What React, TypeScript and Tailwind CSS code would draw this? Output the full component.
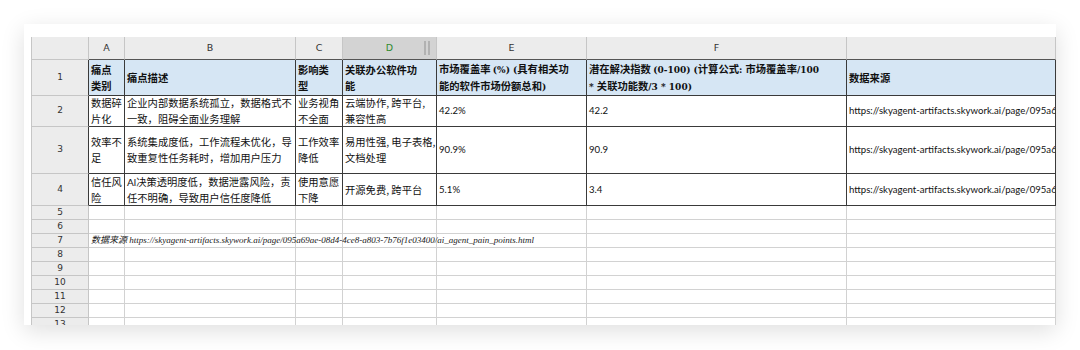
import React from "react";

const COLS = [58, 36, 171, 47, 94, 150, 260, 209];
const ROWS = [23, 36, 31, 47, 32, 14, 14, 14, 14, 14, 14, 14, 14, 14];
const LETTERS = ["", "A", "B", "C", "D", "E", "F", ""];

const URL =
    "https://skyagent-artifacts.skywork.ai/page/095a69ae-08d4-4ce8-a803-7b76f1e03400/ai_agent_pain_points.html";

// small serif bold for latin bits of the header row
const L: React.FC<{ children: React.ReactNode }> = ({ children }) => (
    <span className="font-['DejaVu_Serif','Noto_Sans_CJK_SC',serif] text-[9px]">{children}</span>
);

type Cell = { lines: React.ReactNode[]; latin?: boolean };

const DATA: Cell[][] = [
    [
        { lines: ["痛点", "类别"] },
        { lines: ["痛点描述"] },
        { lines: ["影响类", "型"] },
        { lines: ["关联办公软件功", "能"] },
        { lines: [<>市场覆盖率 <L>(%) (</L>具有相关功</>, <>能的软件市场份额总和<L>)</L></>] },
        {
            lines: [
                <>潜在解决指数 <L>(0-100) (</L>计算公式<L>: </L>市场覆盖率<L>/100</L></>,
                <><L>* </L>关联功能数<L>/3 * 100)</L></>,
            ],
        },
        { lines: ["数据来源"] },
    ],
    [
        { lines: ["数据碎", "片化"] },
        { lines: ["企业内部数据系统孤立，数据格式不", "一致，阻碍全面业务理解"] },
        { lines: ["业务视角", "不全面"] },
        { lines: ["云端协作, 跨平台,", "兼容性高"] },
        { lines: ["42.2%"], latin: true },
        { lines: ["42.2"], latin: true },
        { lines: [URL], latin: true },
    ],
    [
        { lines: ["效率不", "足"] },
        { lines: ["系统集成度低，工作流程未优化，导", "致重复性任务耗时，增加用户压力"] },
        { lines: ["工作效率", "降低"] },
        { lines: ["易用性强, 电子表格,", "文档处理"] },
        { lines: ["90.9%"], latin: true },
        { lines: ["90.9"], latin: true },
        { lines: [URL], latin: true },
    ],
    [
        { lines: ["信任风", "险"] },
        { lines: [<><span className="font-['Lato',sans-serif] text-[10px]">Al</span>决策透明度低，数据泄露风险，责</>, "任不明确，导致用户信任度降低"] },
        { lines: ["使用意愿", "下降"] },
        { lines: ["开源免费, 跨平台"] },
        { lines: ["5.1%"], latin: true },
        { lines: ["3.4"], latin: true },
        { lines: [URL], latin: true },
    ],
];

const ColHeader: React.FC<{ c: number }> = ({ c }) => {
    const selected = c === 4;
    return (
        <div
            className={`relative flex items-center justify-center border-r border-b border-r-[#c6c6c6] text-[9.5px] font-['DejaVu_Sans',sans-serif] ${
                c === 0 ? "border-b-[#c6c6c6] border-l border-l-[#c6c6c6]" : "border-b-[#555]"
            } ${selected ? "bg-[#d3d3d3] text-[#2f8a2f]" : "bg-[#ececec] text-[#333]"}`}
        >
            {LETTERS[c]}
            {selected && (
                <div className="absolute right-[6px] top-[4px] flex gap-[2px]">
                    <div className="h-[14px] w-[2px] bg-[#b2b2b2]" />
                    <div className="h-[14px] w-[2px] bg-[#b2b2b2]" />
                </div>
            )}
        </div>
    );
};

const DataCell: React.FC<{ r: number; cell: Cell }> = ({ r, cell }) => {
    const head = r === 1;
    return (
        <div
            className={`flex flex-col justify-center overflow-hidden border-r border-b border-[#3a3a3a] px-[2px] text-[#111] ${
                head ? "bg-[#d6e6f4] font-bold" : "bg-white"
            }`}
        >
            {cell.lines.map((line, i) => (
                <div
                    key={i}
                    className={`whitespace-nowrap ${
                        cell.latin
                            ? "font-['Lato',sans-serif] text-[9.6px] leading-[14px]"
                            : "font-['Noto_Sans_CJK_SC',sans-serif] text-[10.3px] leading-[16px]"
                    }`}
                >
                    {line}
                </div>
            ))}
        </div>
    );
};

export default function App() {
    return (
        <div className="h-[350px] w-[1080px] bg-white pt-[24px] pl-[24px]">
            <div className="h-[301px] w-[1032px] overflow-hidden bg-white pt-[13px] pl-[7px] shadow-[0_6px_22px_rgba(0,0,0,0.13)]">
                <div
                    className="grid"
                    style={{
                        gridTemplateColumns: COLS.map((w) => `${w}px`).join(" "),
                        gridTemplateRows: ROWS.map((h) => `${h}px`).join(" "),
                    }}
                >
                    {ROWS.map((_, r) =>
                        COLS.map((__, c) => {
                            const key = `${r}-${c}`;
                            if (r === 0) return <ColHeader key={key} c={c} />;
                            if (c === 0)
                                return (
                                    <div
                                        key={key}
                                        className={`flex items-center justify-center border-l border-b border-r border-l-[#c6c6c6] border-b-[#c6c6c6] bg-[#ececec] font-['DejaVu_Sans',sans-serif] text-[9px] text-[#333] ${
                                            r <= 4 ? "border-r-[#3a3a3a]" : "border-r-[#c6c6c6]"
                                        }`}
                                    >
                                        {r}
                                    </div>
                                );
                            if (r <= 4) return <DataCell key={key} r={r} cell={DATA[r - 1][c - 1]} />;
                            if (r === 7 && c === 1)
                                return (
                                    <div
                                        key={key}
                                        className="relative z-10 flex items-center overflow-visible whitespace-nowrap border-r border-b border-[#d2d2d2] pl-[2px] font-['Liberation_Serif','Noto_Sans_CJK_SC',serif] text-[9px] italic text-[#222]"
                                    >
                                        数据来源 {URL}
                                    </div>
                                );
                            return <div key={key} className="border-r border-b border-[#d2d2d2]" />;
                        })
                    )}
                </div>
            </div>
        </div>
    );
}
